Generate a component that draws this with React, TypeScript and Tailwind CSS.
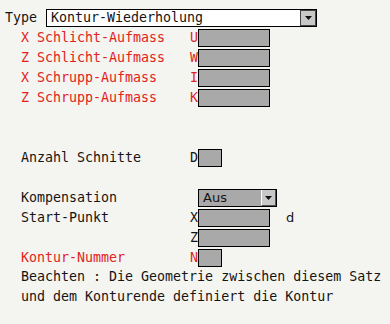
import React from 'react';

const mono = { fontFamily: '"DejaVu Sans Mono", "Liberation Mono", monospace' };
const sans = { fontFamily: '"DejaVu Sans", "Liberation Sans", sans-serif' };

const Arrow = ({ raised }: { raised?: boolean }) => (
  <div
    className={
      raised
        ? 'w-[15px] h-full border-l border-white bg-[#c8c8c8] flex items-center justify-center border-r border-b border-r-[#555] border-b-[#555]'
        : 'w-[16px] h-[16px] bg-[#c8c8c8] border border-[#444] flex items-center justify-center'
    }
  >
    <svg width="7" height="4" viewBox="0 0 7 4">
      <path d="M0 0h7L3.5 4z" fill="#111" />
    </svg>
  </div>
);

const Field = ({ w = 72 }: { w?: number }) => (
  <div
    className={`h-[18px] bg-[#a9a9a9] border border-black ${w === 72 ? 'w-[72px]' : 'w-[24px]'}`}
  />
);

interface RowProps {
  label?: string;
  letter?: string;
  red?: boolean;
  w?: number;
  children?: React.ReactNode;
}

const Row = ({ label, letter, red, w, children }: RowProps) => (
  <div className="flex items-center h-[18px]">
    <span className={`w-[169px] pl-[21px] box-content ${red ? 'text-[#e2231a]' : 'text-[#141414]'}`}>
      {label}
    </span>
    <span className={`w-[8px] text-right ${red ? 'text-[#e2231a]' : 'text-[#141414]'}`}>{letter}</span>
    {children ?? <Field w={w} />}
  </div>
);

export default function App() {
  return (
    <div
      className="w-[390px] h-[324px] bg-[#f4f4f1] pt-[9px] text-[13.3px] leading-[20px] overflow-hidden"
      style={mono}
    >
      <div className="flex items-center h-[18px]">
        <span className="w-[46px] pl-[5px] text-[#141414]">Type</span>
        <div className="w-[271px] h-[18px] bg-white border border-black flex items-center justify-between pl-[4px] pr-[0px]">
          <span className="text-[#141414]">Kontur-Wiederholung</span>
          <Arrow />
        </div>
      </div>

      <div className="flex flex-col gap-[2px] mt-[2px]">
        <Row label="X Schlicht-Aufmass" letter="U" red />
        <Row label="Z Schlicht-Aufmass" letter="W" red />
        <Row label="X Schrupp-Aufmass" letter="I" red />
        <Row label="Z Schrupp-Aufmass" letter="K" red />
      </div>

      <div className="mt-[42px]">
        <Row label="Anzahl Schnitte" letter="D" w={24} />
      </div>

      <div className="flex flex-col gap-[2px] mt-[22px]">
        <Row label="Kompensation">
          <div className="w-[79px] h-[18px] bg-[#a9a9a9] border border-black flex items-center justify-between">
            <span className="pl-[4px] text-[13px] text-[#141414]" style={sans}>
              Aus
            </span>
            <Arrow raised />
          </div>
        </Row>
        <Row label="Start-Punkt" letter="X">
          <Field />
          <span className="ml-[16px] text-[13px] text-[#141414]" style={sans}>
            d
          </span>
        </Row>
        <Row letter="Z" />
        <Row label="Kontur-Nummer" letter="N" red w={24} />
      </div>

      <div className="pl-[21px] text-[#141414]">
        <div>Beachten : Die Geometrie zwischen diesem Satz</div>
        <div>und dem Konturende definiert die Kontur</div>
      </div>
    </div>
  );
}
